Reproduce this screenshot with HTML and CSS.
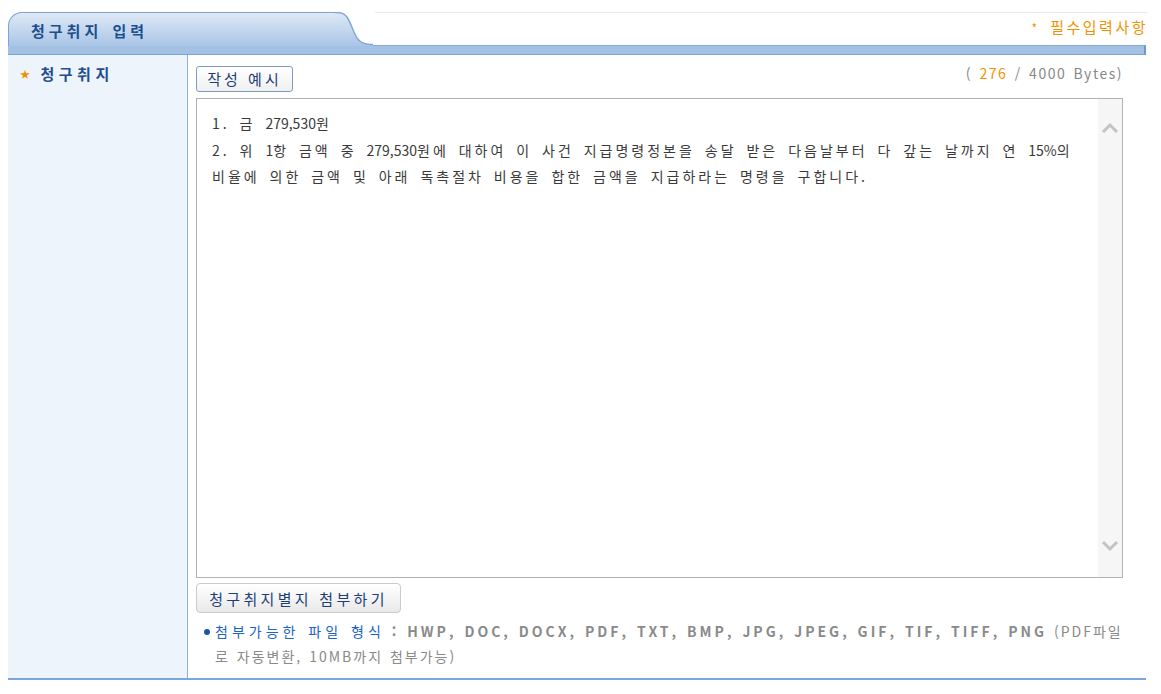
FILE: index.html
```html
<!DOCTYPE html>
<html lang="ko">
  <head>
    <meta charset="UTF-8" />
    <meta name="viewport" content="width=device-width, initial-scale=1.0" />
    <title>청구취지 입력</title>
    <link rel="stylesheet" href="styles.css">
  </head>
  <body>
    <div class="wrap">
      <header class="head">
        <div class="tab">청구취지 입력</div>
        <svg class="curve" width="38" height="34" viewBox="0 0 38 34">
          <defs>
            <linearGradient id="tabGrad" x1="0" y1="0" x2="0" y2="1">
              <stop offset="0" stop-color="#dfe9f6" />
              <stop offset="1" stop-color="#a9c5e6" />
            </linearGradient>
          </defs>
          <path d="M0 0.5 L3 0.5 C12 0.5 14 8 19 20 C23 30 28 32.5 38 32.5 L38 34 L0 34 Z" fill="url(#tabGrad)" />
          <path d="M0 0.5 L3 0.5 C12 0.5 14 8 19 20 C23 30 28 32.5 38 32.5" fill="none" stroke="#7ea5d3" stroke-width="1.4" />
        </svg>
        <div class="head-right"><span class="star">*</span> 필수입력사항</div>
      </header>
      <div class="bar"></div>

      <section class="row">
        <div class="label"><span class="dot">★</span>청구취지</div>
        <div class="field">
          <div class="field-top">
            <button type="button" class="btn-example">작성 예시</button>
            <span class="count">( <em>276</em> / 4000 Bytes)</span>
          </div>

          <div class="textbox">
            <div class="text">
              <p>1. 금 <span class="num">279,530</span>원</p>
              <p>2. 위 <span class="num">1</span>항 금액 중 <span class="num">279,530</span>원에 대하여 이 사건 지급명령정본을 송달 받은 다음날부터 다 갚는 날까지 연 <span class="num">15%</span>의 비율에 의한 금액 및 아래 독촉절차 비용을 합한 금액을 지급하라는 명령을 구합니다.</p>
            </div>
            <div class="scroll">
              <svg width="18" height="12" viewBox="0 0 18 12"><path d="M2 10 L9 3 L16 10" fill="none" stroke="#c3c3c3" stroke-width="3" /></svg>
              <svg width="18" height="12" viewBox="0 0 18 12"><path d="M2 2 L9 9 L16 2" fill="none" stroke="#c3c3c3" stroke-width="3" /></svg>
            </div>
          </div>

          <button type="button" class="btn-attach">청구취지별지 첨부하기</button>

          <p class="info">
            <span class="bullet"></span><span class="info-title">첨부가능한 파일 형식</span>
            <b>: HWP, DOC, DOCX, PDF, TXT, BMP, JPG, JPEG, GIF, TIF, TIFF, PNG</b>
            (PDF파일로 자동변환, 10MB까지 첨부가능)
          </p>
        </div>
      </section>
    </div>
  </body>
</html>
```

FILE: styles.css
```css
body {
  margin: 0;
  padding: 0;
  background-color: #fff;
  font-family: "Noto Sans CJK KR", "Noto Sans", sans-serif;
  font-size: 14px;
  color: #333;
}

.wrap {
  width: 1138px;
  margin: 12px 0 0 8px;
}

.head {
  display: flex;
  align-items: flex-end;
  height: 33px;
}

.tab {
  box-sizing: border-box;
  width: 327px;
  height: 34px;
  margin-bottom: -1px;
  padding: 7px 0 0 22px;
  background: linear-gradient(#dfe9f6, #a9c5e6);
  border-top: 1px solid #7ea5d3;
  border-left: 1px solid #7ea5d3;
  border-radius: 14px 0 0 0;
  font-size: 15px;
  font-weight: bold;
  letter-spacing: 4px;
  word-spacing: 2px;
  color: #1d4f8f;
  line-height: 22px;
}

.curve {
  display: block;
  margin-bottom: -1px;
}

.head-right {
  flex: 1;
  align-self: stretch;
  border-top: 1px solid #e6ebf0;
  text-align: right;
  color: #f39200;
  font-size: 15px;
  letter-spacing: 2.5px;
  line-height: 28px;
  margin-left: 2px;
  margin-right: -2px;
}

.head-right .star {
  font-size: 12px;
  margin-right: 4px;
}

.bar {
  height: 8px;
  background-color: #a3c1e3;
  border-top: 1px solid #86abd6;
  border-bottom: 1px solid #7ba3d3;
  border-right: 2px solid #6e98cc;
}

.row {
  display: flex;
  border-bottom: 2px solid #7aa8de;
}

.label {
  box-sizing: border-box;
  width: 180px;
  padding: 9px 0 0 12px;
  background-color: #eef4fc;
  border-right: 1px solid #8eb1dc;
  font-size: 15px;
  font-weight: bold;
  letter-spacing: 4.5px;
  color: #1d4f8f;
  line-height: 20px;
}

.label .dot {
  color: #f39200;
  font-size: 10px;
  margin-right: 6px;
  vertical-align: 2px;
}

.field {
  flex: 1;
  padding: 11px 23px 9px 8px;
}

.field-top {
  display: flex;
  justify-content: space-between;
  align-items: flex-start;
  margin-bottom: 6px;
}

.btn-example {
  width: 97px;
  height: 26px;
  padding: 0;
  background: linear-gradient(#fff, #f0f0f0);
  border: 1px solid #7f9cc0;
  border-radius: 3px;
  font-family: inherit;
  font-size: 15px;
  letter-spacing: 3px;
  color: #1d3f78;
  line-height: 22px;
}

.count {
  color: #888;
  font-size: 14px;
  letter-spacing: 1.5px;
  word-spacing: 2px;
  margin-top: -3px;
}

.count em {
  font-style: normal;
  color: #f39200;
}

.textbox {
  display: flex;
  height: 478px;
  border: 1px solid #b2b2b2;
}

.text {
  flex: 1;
  padding: 11px 20px 0 15px;
  color: #3a3a3a;
  letter-spacing: 3px;
  word-spacing: 3px;
  line-height: 26.5px;
}

.text p {
  margin: 0;
}

.text .num {
  letter-spacing: 0;
}

.scroll {
  width: 24px;
  background-color: #f6f6f6;
  display: flex;
  flex-direction: column;
  justify-content: space-between;
  align-items: center;
  padding: 23px 0 25px;
}

.btn-attach {
  display: block;
  width: 205px;
  height: 30px;
  margin-top: 5px;
  padding: 0;
  background: linear-gradient(#fff, #e9e9e9);
  border: 1px solid #cbcbcb;
  border-radius: 4px;
  font-family: inherit;
  font-size: 15px;
  letter-spacing: 3.3px;
  color: #1d3f78;
}

.info {
  margin: 6px -6px 0 8px;
  padding-left: 11px;
  text-indent: -11px;
  color: #8a8a8a;
  line-height: 25px;
  letter-spacing: 2px;
  word-spacing: 1px;
}

.bullet {
  display: inline-block;
  width: 6px;
  height: 6px;
  margin-right: 5px;
  border-radius: 50%;
  background-color: #1a55a8;
  vertical-align: 2px;
}

.info-title {
  color: #1a64c8;
  letter-spacing: 4px;
}

.info b {
  letter-spacing: 3px;
}
```
